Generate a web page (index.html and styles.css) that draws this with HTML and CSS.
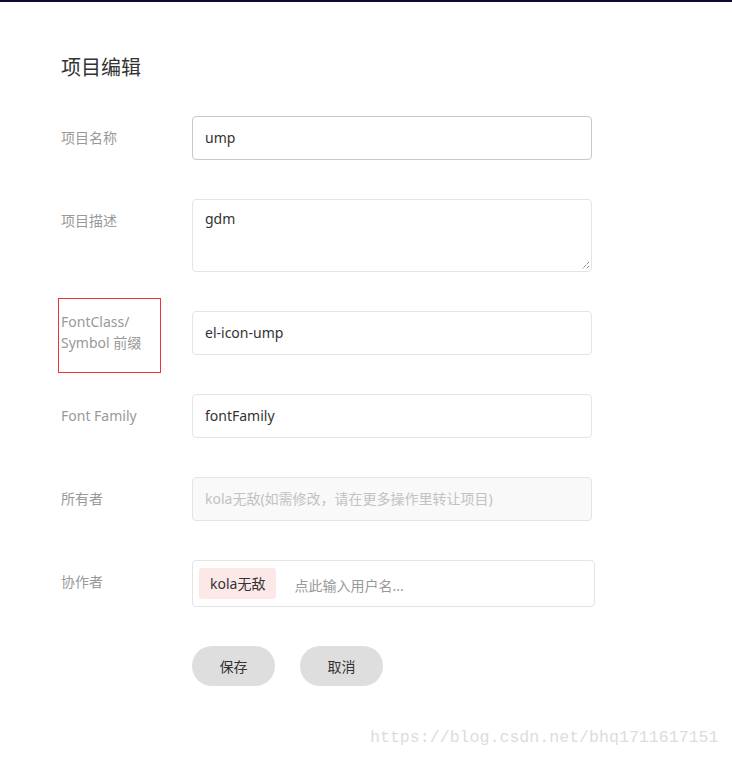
FILE: index.html
```html
<!DOCTYPE html>
<html lang="zh">
<head>
<meta charset="utf-8">
<title>项目编辑</title>
<link rel="stylesheet" href="styles.css">
</head>
<body>
<div class="page">
  <h1 class="title">项目编辑</h1>
  <form class="form">
    <div class="row">
      <label class="label">项目名称</label>
      <div class="field"><div class="input input-active">ump</div></div>
    </div>
    <div class="row">
      <label class="label">项目描述</label>
      <div class="field">
        <div class="input textarea">gdm
          <svg class="grip" width="10" height="10" viewBox="0 0 10 10"><path d="M9 2 L2 9 M9 6 L6 9" stroke="#555" stroke-width="1" stroke-dasharray="1 1" fill="none"/></svg>
        </div>
      </div>
    </div>
    <div class="row">
      <label class="label"><span class="label-text">FontClass/<br>Symbol 前缀</span><span class="mark"></span></label>
      <div class="field"><div class="input">el-icon-ump</div></div>
    </div>
    <div class="row">
      <label class="label">Font Family</label>
      <div class="field"><div class="input">fontFamily</div></div>
    </div>
    <div class="row">
      <label class="label">所有者</label>
      <div class="field"><div class="input disabled">kola无敌(如需修改，请在更多操作里转让项目)</div></div>
    </div>
    <div class="row">
      <label class="label">协作者</label>
      <div class="field">
        <div class="tags">
          <span class="tag">kola无敌</span>
          <span class="placeholder">点此输入用户名...</span>
        </div>
      </div>
    </div>
    <div class="actions">
      <button type="button" class="btn btn-save">保存</button>
      <button type="button" class="btn">取消</button>
    </div>
  </form>
  <div class="watermark">https://blog.csdn.net/bhq1711617151</div>
</div>
</body>
</html>
```
FILE: styles.css
```css
html, body {
  margin: 0;
  padding: 0;
  background: #fff;
}
body {
  font-family: "Noto Sans", "Noto Sans CJK SC", sans-serif;
  color: #333;
  font-size: 14px;
}
.page {
  position: relative;
  height: 757px;
  box-sizing: border-box;
  border-top: 2px solid #0c0a2e;
  padding: 0 0 0 61px;
  overflow: hidden;
}
.title {
  margin: 52px 0 0 0;
  font-size: 20px;
  line-height: 28px;
  font-weight: normal;
  color: #333;
}
.form {
  margin-top: 34px;
}
.row {
  display: flex;
  align-items: flex-start;
  margin-bottom: 39px;
}
.label {
  width: 131px;
  height: 44px;
  flex: none;
  display: flex;
  align-items: center;
  line-height: 21px;
  font-size: 14px;
  color: #999;
  position: relative;
  margin-top: -1px;
}
.mark {
  position: absolute;
  left: -3px;
  top: -12px;
  width: 101px;
  height: 73px;
  border: 1px solid #e8343a;
}
.field {
  flex: none;
}
.input {
  width: 400px;
  height: 44px;
  box-sizing: border-box;
  border: 1px solid #e4e4e4;
  border-radius: 4px;
  padding: 0 12px;
  line-height: 42px;
  font-size: 14px;
  color: #333;
  position: relative;
}
.input-active {
  border-color: #c8c8c8;
}
.textarea {
  height: 73px;
  line-height: 20px;
  padding-top: 9px;
}
.grip {
  position: absolute;
  right: 1px;
  bottom: 1px;
}
.disabled {
  background: #f9f9f9;
  color: #c2c2c2;
}
.tags {
  width: 403px;
  height: 47px;
  box-sizing: border-box;
  border: 1px solid #e4e4e4;
  border-radius: 4px;
  display: flex;
  align-items: center;
  padding: 0 6px;
  gap: 18px;
}
.tag {
  background: #fce8e6;
  border-radius: 3px;
  height: 31px;
  line-height: 31px;
  padding: 0 11px;
  color: #333;
  font-size: 14px;
}
.placeholder {
  color: #999;
  font-size: 14px;
  margin-top: 2px;
}
.actions {
  display: flex;
  gap: 25px;
  padding-left: 131px;
}
.btn {
  width: 83px;
  height: 40px;
  border: none;
  border-radius: 20px;
  background: #dedede;
  color: #333;
  font-family: "Noto Sans", "Noto Sans CJK SC", sans-serif;
  font-size: 14px;
  padding: 0;
}
.watermark {
  position: absolute;
  left: 370px;
  top: 726px;
  font-family: "Liberation Mono", monospace;
  font-size: 16.6px;
  color: #dedcd8;
  white-space: nowrap;
}
```
